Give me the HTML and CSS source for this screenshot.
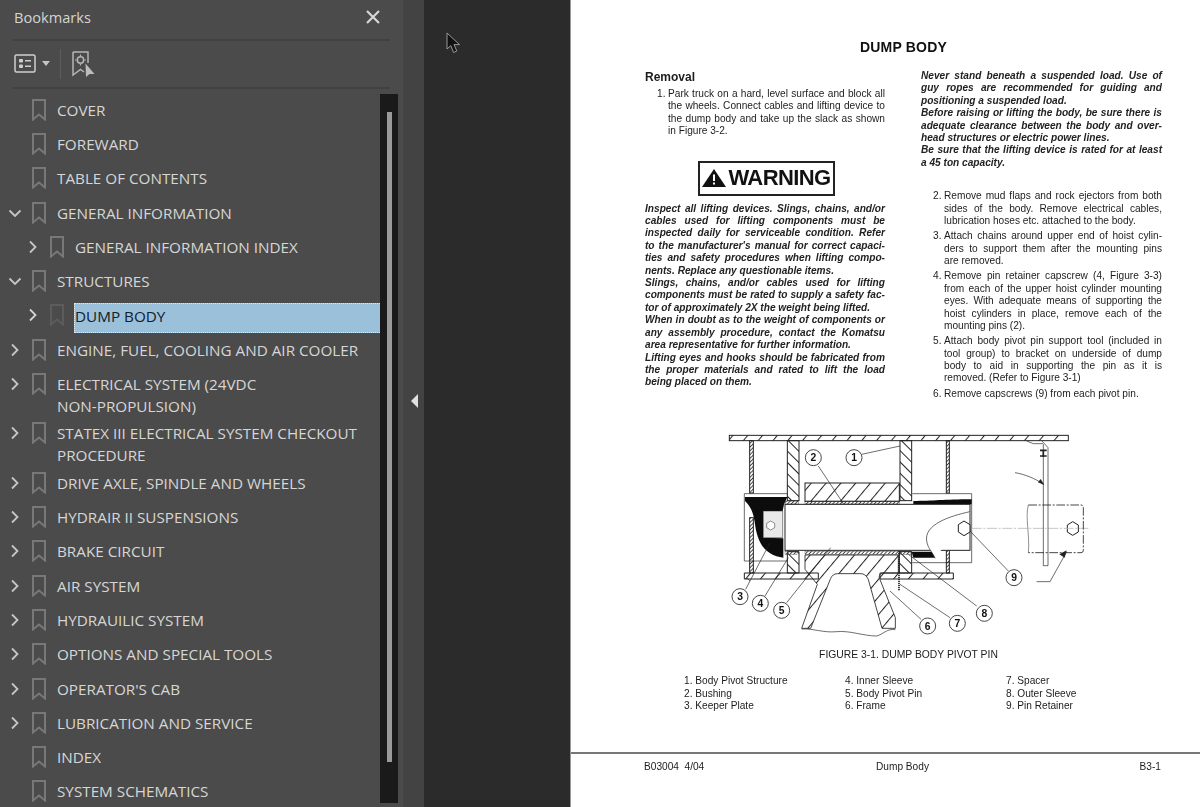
FILE: index.html
```html
<!DOCTYPE html>
<html lang="en">
<head>
<meta charset="utf-8">
<title>Bookmarks - Dump Body</title>
<link rel="stylesheet" href="styles.css">
</head>
<body>
<svg class="defs" width="0" height="0" aria-hidden="true">
  <defs>
    <symbol id="bm" viewBox="0 0 14 22"><path d="M1 1H13V20.5L7 15.5L1 20.5Z" fill="none" stroke="currentColor" stroke-width="2"/></symbol>
    <symbol id="cr" viewBox="0 0 14 14"><path d="M4 1.5L9.5 7L4 12.5" fill="none" stroke="currentColor" stroke-width="1.8"/></symbol>
    <symbol id="cd" viewBox="0 0 14 14"><path d="M1.5 4.5L7 10L12.5 4.5" fill="none" stroke="currentColor" stroke-width="1.8"/></symbol>
    <pattern id="hb" width="24" height="24" patternUnits="userSpaceOnUse" patternTransform="rotate(-45)"><rect width="3" height="24" fill="#222"/></pattern>
    <pattern id="hw" width="34" height="34" patternUnits="userSpaceOnUse" patternTransform="rotate(40)"><rect width="3" height="34" fill="#222"/></pattern>
    <pattern id="hs" width="8" height="8" patternUnits="userSpaceOnUse" patternTransform="rotate(45)"><rect width="2.5" height="8" fill="#333"/></pattern>
  </defs>
</svg>
<div class="app">
  <aside class="sidebar">
    <header class="side-head">
      <h1 class="side-title">Bookmarks</h1>
      <svg class="close" viewBox="0 0 14 14"><path d="M1 1L13 13M13 1L1 13" stroke="#d6d6d6" stroke-width="2.2"/></svg>
    </header>
    <div class="toolbar">
      <svg class="tool-list" viewBox="0 0 22 19"><rect x="1" y="1" width="20" height="17" rx="1.5" fill="none" stroke="#cfcfcf" stroke-width="1.5"/><rect x="5" y="5" width="4" height="3.5" rx="1" fill="#cfcfcf"/><rect x="5" y="10.5" width="4" height="3.5" rx="1" fill="#cfcfcf"/><path d="M11 6.7H17M11 12.3H17" stroke="#cfcfcf" stroke-width="1.5"/></svg>
      <svg class="tool-caret" viewBox="0 0 8 5"><path d="M0 0H8L4 5Z" fill="#c4c4c4"/></svg>
      <span class="tool-sep"></span>
      <svg class="tool-find" viewBox="0 0 23 26"><path d="M1 1H16V12M1 1V24L8.5 18.5L12 21" fill="none" stroke="#b5b5b5" stroke-width="1.5"/><circle cx="8.5" cy="9" r="3.2" fill="none" stroke="#b5b5b5" stroke-width="1.5"/><path d="M8.5 3.5V5M8.5 13V14.5M3 9H4.5M12.5 9H14" stroke="#b5b5b5" stroke-width="1.2"/><path d="M13.5 12.5L22.5 23H17.5L14 26Z" fill="#bcbcbc"/></svg>
    </div>
    <div class="tree-wrap">
      <ul class="tree">
        <li class="row"><span class="caret"></span><svg class="mark"><use href="#bm"/></svg><span class="label">COVER</span></li>
        <li class="row"><span class="caret"></span><svg class="mark"><use href="#bm"/></svg><span class="label">FOREWARD</span></li>
        <li class="row"><span class="caret"></span><svg class="mark"><use href="#bm"/></svg><span class="label">TABLE OF CONTENTS</span></li>
        <li class="row"><svg class="caret"><use href="#cd"/></svg><svg class="mark"><use href="#bm"/></svg><span class="label">GENERAL INFORMATION</span></li>
        <li class="row child"><svg class="caret"><use href="#cr"/></svg><svg class="mark"><use href="#bm"/></svg><span class="label">GENERAL INFORMATION INDEX</span></li>
        <li class="row"><svg class="caret"><use href="#cd"/></svg><svg class="mark"><use href="#bm"/></svg><span class="label">STRUCTURES</span></li>
        <li class="row child selected"><svg class="caret"><use href="#cr"/></svg><svg class="mark"><use href="#bm"/></svg><span class="label">DUMP BODY</span></li>
        <li class="row"><svg class="caret"><use href="#cr"/></svg><svg class="mark"><use href="#bm"/></svg><span class="label">ENGINE, FUEL, COOLING AND AIR COOLER</span></li>
        <li class="row two"><svg class="caret"><use href="#cr"/></svg><svg class="mark"><use href="#bm"/></svg><span class="label">ELECTRICAL SYSTEM (24VDC<br>NON-PROPULSION)</span></li>
        <li class="row two"><svg class="caret"><use href="#cr"/></svg><svg class="mark"><use href="#bm"/></svg><span class="label">STATEX III ELECTRICAL SYSTEM CHECKOUT<br>PROCEDURE</span></li>
        <li class="row"><svg class="caret"><use href="#cr"/></svg><svg class="mark"><use href="#bm"/></svg><span class="label">DRIVE AXLE, SPINDLE AND WHEELS</span></li>
        <li class="row"><svg class="caret"><use href="#cr"/></svg><svg class="mark"><use href="#bm"/></svg><span class="label">HYDRAIR II SUSPENSIONS</span></li>
        <li class="row"><svg class="caret"><use href="#cr"/></svg><svg class="mark"><use href="#bm"/></svg><span class="label">BRAKE CIRCUIT</span></li>
        <li class="row"><svg class="caret"><use href="#cr"/></svg><svg class="mark"><use href="#bm"/></svg><span class="label">AIR SYSTEM</span></li>
        <li class="row"><svg class="caret"><use href="#cr"/></svg><svg class="mark"><use href="#bm"/></svg><span class="label">HYDRAUILIC SYSTEM</span></li>
        <li class="row"><svg class="caret"><use href="#cr"/></svg><svg class="mark"><use href="#bm"/></svg><span class="label">OPTIONS AND SPECIAL TOOLS</span></li>
        <li class="row"><svg class="caret"><use href="#cr"/></svg><svg class="mark"><use href="#bm"/></svg><span class="label">OPERATOR'S CAB</span></li>
        <li class="row"><svg class="caret"><use href="#cr"/></svg><svg class="mark"><use href="#bm"/></svg><span class="label">LUBRICATION AND SERVICE</span></li>
        <li class="row"><span class="caret"></span><svg class="mark"><use href="#bm"/></svg><span class="label">INDEX</span></li>
        <li class="row"><span class="caret"></span><svg class="mark"><use href="#bm"/></svg><span class="label">SYSTEM SCHEMATICS</span></li>
      </ul>
      <div class="scrollbar"><div class="thumb"></div></div>
    </div>
  </aside>
  <div class="splitter"><svg class="collapse" viewBox="0 0 7 14"><path d="M7 0V14L0 7Z" fill="#e0e0e0"/></svg></div>
  <main class="viewer">
    <svg class="pointer" viewBox="0 0 15 22"><path d="M1 1V17L4.8 13.6L7.6 20.5L10.8 19L8 12.6H13.5Z" fill="#111" stroke="#9a9a9a" stroke-width="1"/></svg>
    <article class="page">
      <div class="page-body">
        <h2 class="doc-title">DUMP BODY</h2>
        <div class="columns">
          <section class="col">
            <h3 class="removal">Removal</h3>
            <div class="item">
              <span class="num">1.</span>
              <div class="lines">
                <span class="j">Park truck on a hard, level surface and block all</span>
                <span class="j">the wheels. Connect cables and lifting device to</span>
                <span class="j">the dump body and take up the slack as shown</span>
                <span>in Figure 3-2.</span>
              </div>
            </div>
            <div class="warning">
              <svg class="warn-tri" viewBox="0 0 24 18"><path d="M12 0L24 18H0Z" fill="#111"/><path d="M11 5.5H13V12H11ZM11 13.5H13V15.5H11Z" fill="#fff"/></svg>
              <span class="warn-word">WARNING</span>
            </div>
            <div class="italic">
              <span class="j">Inspect all lifting devices. Slings, chains, and/or</span>
              <span class="j">cables used for lifting components must be</span>
              <span class="j">inspected daily for serviceable condition. Refer</span>
              <span class="j">to the manufacturer's manual for correct capaci-</span>
              <span class="j">ties and safety procedures when lifting compo-</span>
              <span>nents. Replace any questionable items.</span>
              <span class="j">Slings, chains, and/or cables used for lifting</span>
              <span class="j">components must be rated to supply a safety fac-</span>
              <span>tor of approximately 2X the weight being lifted.</span>
              <span class="j">When in doubt as to the weight of components or</span>
              <span class="j">any assembly procedure, contact the Komatsu</span>
              <span>area representative for further information.</span>
              <span class="j">Lifting eyes and hooks should be fabricated from</span>
              <span class="j">the proper materials and rated to lift the load</span>
              <span>being placed on them.</span>
            </div>
          </section>
          <section class="col">
            <div class="italic">
              <span class="j">Never stand beneath a suspended load. Use of</span>
              <span class="j">guy ropes are recommended for guiding and</span>
              <span>positioning a suspended load.</span>
              <span class="j">Before raising or lifting the body, be sure there is</span>
              <span class="j">adequate clearance between the body and over-</span>
              <span>head structures or electric power lines.</span>
              <span class="j">Be sure that the lifting device is rated for at least</span>
              <span>a 45 ton capacity.</span>
            </div>
            <div class="steps">
              <div class="item"><span class="num">2.</span><div class="lines">
                <span class="j">Remove mud flaps and rock ejectors from both</span>
                <span class="j">sides of the body. Remove electrical cables,</span>
                <span>lubrication hoses etc. attached to the body.</span></div></div>
              <div class="item"><span class="num">3.</span><div class="lines">
                <span class="j">Attach chains around upper end of hoist cylin-</span>
                <span class="j">ders to support them after the mounting pins</span>
                <span>are removed.</span></div></div>
              <div class="item"><span class="num">4.</span><div class="lines">
                <span class="j">Remove pin retainer capscrew (4, Figure 3-3)</span>
                <span class="j">from each of the upper hoist cylinder mounting</span>
                <span class="j">eyes. With adequate means of supporting the</span>
                <span class="j">hoist cylinders in place, remove each of the</span>
                <span>mounting pins (2).</span></div></div>
              <div class="item"><span class="num">5.</span><div class="lines">
                <span class="j">Attach body pivot pin support tool (included in</span>
                <span class="j">tool group) to bracket on underside of dump</span>
                <span class="j">body to aid in supporting the pin as it is</span>
                <span>removed. (Refer to Figure 3-1)</span></div></div>
              <div class="item"><span class="num">6.</span><div class="lines">
                <span>Remove capscrews (9) from each pivot pin.</span></div></div>
            </div>
          </section>
        </div>
        <figure class="figure">
          <svg class="diagram" viewBox="0 0 1200 690">
            <g fill="none" stroke="#222" stroke-width="3">
              <rect x="88" y="43" width="1017" height="16" fill="url(#hw)"/>
              <rect x="149" y="59" width="11" height="157" fill="url(#hs)"/>
              <rect x="149" y="290" width="11" height="166" fill="url(#hs)"/>
              <rect x="739" y="59" width="9" height="157" fill="url(#hs)"/>
              <rect x="739" y="295" width="9" height="161" fill="url(#hs)"/>
              <rect x="262" y="59" width="35" height="180" fill="url(#hb)"/>
              <rect x="600" y="59" width="35" height="180" fill="url(#hb)"/>
              <rect x="315" y="186" width="283" height="55" fill="url(#hw)"/>
              <path d="M133 218H262M637 218H815V425H637M133 218V420H262" stroke-width="2"/>
              <path d="M262 392H297V456H262Z" fill="url(#hb)"/>
              <path d="M598 392H635V456H598Z" fill="url(#hb)"/>
            </g>
            <path d="M135 228H262L252 250L248 270H190V350L250 352V410C210 405 175 385 165 310C160 270 150 255 135 240Z" fill="#0c0c0c"/>
            <path d="M640 240C700 240 730 235 815 235V250H640Z" fill="#0c0c0c"/>
            <path d="M635 392H698L706 410H640Z" fill="#0c0c0c"/>
            <g fill="none" stroke="#222" stroke-width="3">
              <rect x="255" y="250" width="555" height="138" fill="#fff"/>
              <rect x="315" y="240" width="283" height="9" fill="url(#hs)" stroke-width="1"/>
              <rect x="315" y="391" width="283" height="9" fill="url(#hs)" stroke-width="1"/>
              <rect x="255" y="240" width="40" height="9" fill="url(#hs)" stroke-width="1"/>
              <rect x="255" y="391" width="36" height="9" fill="url(#hs)" stroke-width="1"/>
              <rect x="600" y="391" width="34" height="9" fill="url(#hs)" stroke-width="1"/>
              <path d="M810 272C750 285 672 310 680 360C684 385 700 395 705 412" fill="#fff" stroke-width="2"/>
              <path d="M133 456H355V474H133ZM540 456H760V474H540Z" fill="url(#hw)"/>
              <path d="M315 402H595V456H548C538 458 535 468 540 476L586 590V622H546L505 476C500 464 492 458 482 458H412C402 458 396 464 392 472L332 622H305L352 490L315 445Z" fill="url(#hw)" stroke-width="2.5"/>
              <path d="M305 624C340 622 370 636 410 632C450 628 490 645 530 645C550 640 560 622 586 626" stroke-width="2"/>
              <path d="M597 390V510" stroke-dasharray="4 2" stroke-width="5"/>
              <path d="M190 270H248V350H190Z" fill="#e9e9e9" stroke-width="1.5"/>
              <polygon points="212,300 224,307 224,320 212,327 200,320 200,307" fill="#fff" stroke-width="1.5"/>
              <polygon points="792,300 810,311 810,333 792,344 775,333 775,311" fill="#fff" stroke-width="3"/>
              <polygon points="1118,302 1135,312 1135,333 1118,343 1102,333 1102,312" fill="#fff" stroke-width="3"/>
              <path d="M815 322H1165" stroke="#bbb" stroke-width="2.5" stroke-dasharray="30 5 6 5"/>
              <path d="M985 252H1143Q1150 252 1150 260V388Q1150 395 1143 395H985" stroke-dasharray="26 5 6 5" stroke-width="2.5"/>
              <path d="M985 252C975 290 990 340 985 395" stroke-width="1.5"/>
              <path d="M980 60L1000 68H1028L1030 70V434H1044V80L1026 60" stroke-width="2"/>
              <path d="M1020 88H1040M1020 105H1040M1030 86V108" stroke-width="5"/>
              <path d="M945 155C975 160 1005 172 1030 190" stroke-width="2"/>
              <path d="M1010 482H1050L1100 392" stroke-width="2"/>
            </g>
            <path d="M1033 192L1014 184L1022 174Z" fill="#222"/>
            <path d="M1100 388L1078 400L1094 410Z" fill="#222"/>
            <g fill="none" stroke="#222" stroke-width="2">
              <path d="M485 100L600 75M355 135L430 248M137 505L210 365M140 470L150 480M195 525L265 410M260 545L392 380M663 595L570 510M750 590L600 490M830 555L625 400M925 450L810 330"/>
            </g>
            <g class="balloons">
              <circle cx="462" cy="110" r="24"/><text x="462" y="121">1</text>
              <circle cx="340" cy="110" r="24"/><text x="340" y="121">2</text>
              <circle cx="120" cy="527" r="24"/><text x="120" y="538">3</text>
              <circle cx="181" cy="547" r="24"/><text x="181" y="558">4</text>
              <circle cx="245" cy="568" r="24"/><text x="245" y="579">5</text>
              <circle cx="683" cy="615" r="24"/><text x="683" y="626">6</text>
              <circle cx="772" cy="607" r="24"/><text x="772" y="618">7</text>
              <circle cx="853" cy="577" r="24"/><text x="853" y="588">8</text>
              <circle cx="942" cy="470" r="24"/><text x="942" y="481">9</text>
            </g>
          </svg>
          <figcaption class="caption">FIGURE 3-1. DUMP BODY PIVOT PIN</figcaption>
        </figure>
        <div class="legend">
          <ul class="legend-col"><li>1. Body Pivot Structure</li><li>2. Bushing</li><li>3. Keeper Plate</li></ul>
          <ul class="legend-col"><li>4. Inner Sleeve</li><li>5. Body Pivot Pin</li><li>6. Frame</li></ul>
          <ul class="legend-col"><li>7. Spacer</li><li>8. Outer Sleeve</li><li>9. Pin Retainer</li></ul>
        </div>
      </div>
      <footer class="page-foot">
        <span class="foot-left">B03004&nbsp; 4/04</span>
        <span class="foot-mid">Dump Body</span>
        <span class="foot-right">B3-1</span>
      </footer>
    </article>
  </main>
</div>
</body>
</html>
```
FILE: styles.css
```css
* { box-sizing: border-box; }
html, body { margin: 0; padding: 0; height: 100%; overflow: hidden; }
body { background: #2b2b2b; font-family: "Open Sans", "Noto Sans", sans-serif; }
ul { list-style: none; margin: 0; padding: 0; }
.defs { position: absolute; }
.app { display: flex; height: 807px; overflow: hidden; }

.sidebar { width: 404px; flex: none; background: #4b4b4b; display: flex; flex-direction: column; overflow: hidden; border-right: 1px solid #444; }
.side-head { height: 41px; margin: 0 13px; display: flex; align-items: center; justify-content: space-between; border-bottom: 2px solid #414141; padding: 1px 10px 6px 1px; flex: none; }
.side-title { margin: 0; font-size: 14.6px; font-weight: 400; color: #d4d4d4; }
.close { width: 14px; height: 14px; margin-top: -1px; }
.toolbar { height: 48px; margin: 0 13px; padding: 0 0 1px 1px; display: flex; align-items: center; border-bottom: 2px solid #414141; flex: none; }
.tool-list { width: 22px; height: 19px; }
.tool-caret { width: 8px; height: 5px; margin-left: 6px; }
.tool-sep { width: 1px; height: 30px; background: #5c5c5c; margin-left: 10px; }
.tool-find { width: 23px; height: 26px; margin-left: 11px; }

.tree-wrap { flex: 1; min-height: 0; display: flex; align-items: flex-start; padding-top: 5px; }
.tree { width: 380px; flex: none; margin-top: -1.4px; }
.row { display: flex; align-items: flex-start; height: 34.3px; padding: 6px 0 0 8px; font-size: 15.25px; line-height: 22px; color: #d6d6d6; }
.row.two { height: 49.4px; }
.row.child { padding-left: 26px; }
.caret { width: 14px; height: 14px; margin-top: 4px; flex: none; color: #c6c6c6; }
.mark { width: 14px; height: 22px; margin-left: 10px; flex: none; color: #787878; }
.label { margin-left: 11px; white-space: nowrap; }
.selected .mark { color: #5c5c5c; }
.selected .label { flex: 1; margin-left: 10px; margin-top: -1.6px; height: 30px; background: #9bc1da; color: #14202c; border: 1px dotted #dfe9f0; border-right: 0; line-height: 24px; }
.selected .caret { color: #d4d4d4; }
.scrollbar { width: 18px; height: 709px; flex: none; background: #1a1a1a; padding: 18px 6px 0 7px; }
.thumb { width: 5px; height: 650px; background: #9a9a9a; }

.splitter { width: 20px; flex: none; background: #434343; display: flex; align-items: center; justify-content: center; padding: 0 0 6px 1px; }
.collapse { width: 7px; height: 14px; }

.viewer { flex: 1; min-width: 0; position: relative; background: #2b2b2b; padding-left: 146px; }
.pointer { position: absolute; left: 22px; top: 32px; width: 15px; height: 22px; }
.page { height: 807px; background: #fff; border-left: 1px solid #999; color: #1c1c1c; font-family: "Liberation Sans", Arial, sans-serif; font-size: 10.15px; line-height: 12.4px; filter: blur(0.35px); display: flex; flex-direction: column; }
.page-body { padding: 39px 38px 0 74px; flex: none; height: 752px; }
.doc-title { margin: 0 0 15px; text-align: center; font-size: 14px; line-height: 16px; font-weight: 700; color: #111; letter-spacing: 0.2px; }
.columns { display: grid; grid-template-columns: 240px 241px; gap: 36px; }
.removal { margin: 0 0 4px; font-size: 12px; line-height: 14px; font-weight: 700; }
.item { display: flex; padding-left: 12px; }
.num { width: 11px; flex: none; }
.lines { flex: 1; min-width: 0; }
.lines span, .italic span { display: block; white-space: nowrap; }
.lines .j, .italic .j { text-align: justify; text-align-last: justify; white-space: normal; }
.italic { font-style: italic; font-weight: 700; color: #222; }
.warning { width: 137px; height: 35px; margin: 23px 0 7px 53px; border: 2px solid #222; display: flex; align-items: center; justify-content: center; gap: 2px; }
.warn-tri { width: 24px; height: 18px; }
.warn-word { font-size: 22px; line-height: 28px; font-weight: 700; color: #111; letter-spacing: -0.6px; }
.steps { margin-top: 21px; display: flex; flex-direction: column; gap: 2.8px; }

.figure { margin: 0; }
.diagram { display: block; width: 400px; height: 230px; margin: 21px 0 0 55px; }
.balloons circle { fill: #fff; stroke: #222; stroke-width: 2.5; }
.balloons text { font-family: "Liberation Sans", Arial, sans-serif; font-size: 31px; font-weight: 700; text-anchor: middle; fill: #111; }
.caption { margin-top: -2px; text-align: center; padding-left: 10px; font-size: 10.35px; }
.legend { display: flex; margin-top: 14px; padding-left: 39px; }
.legend-col { width: 161px; flex: none; }
.page-foot { flex: none; border-top: 2px solid #777; height: 55px; padding: 7px 39px 0 73px; display: grid; grid-template-columns: 1fr auto 1fr; }
.foot-right { text-align: right; }
```
